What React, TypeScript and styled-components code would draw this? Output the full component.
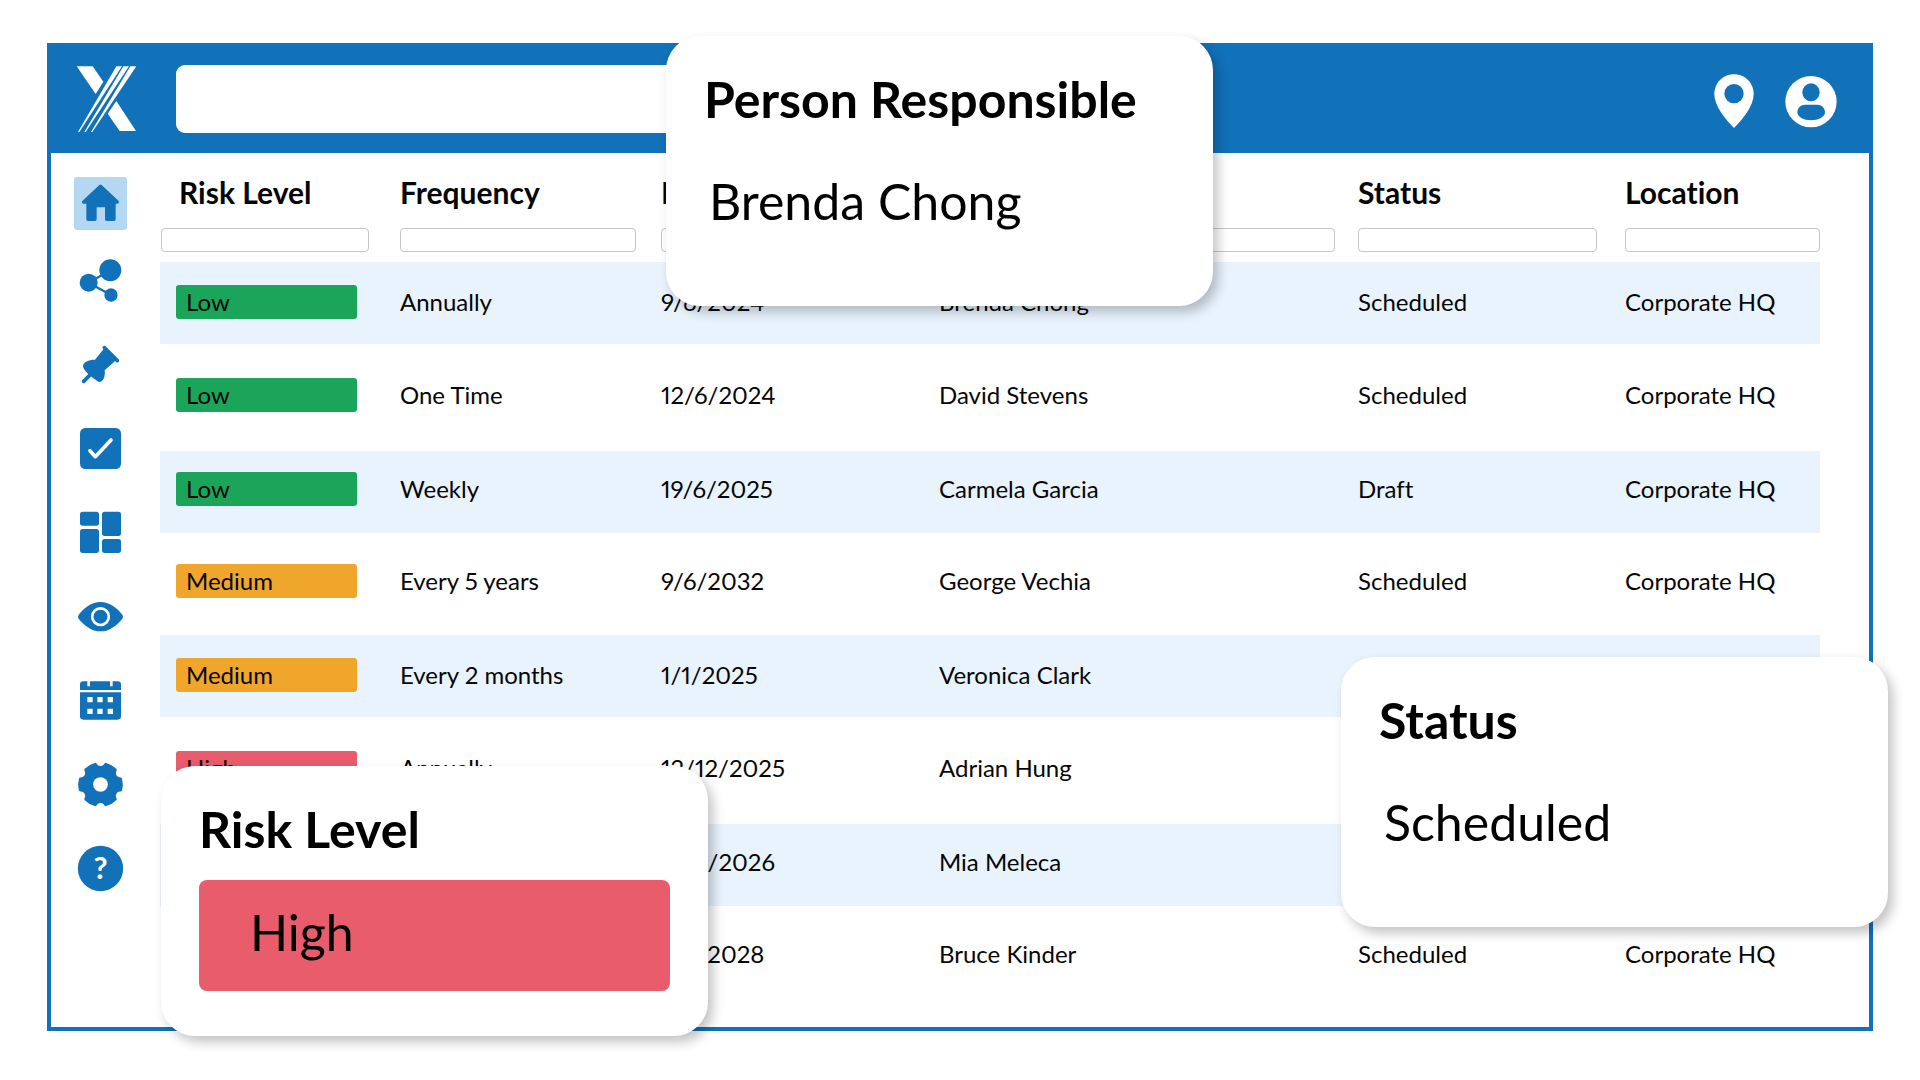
import React from 'react';
import styled, { createGlobalStyle } from 'styled-components';

const BLUE = '#1171b9';

const GlobalStyle = createGlobalStyle`
  * { box-sizing: border-box; }
  body {
    margin: 0;
    background: #ffffff;
    color: #060606;
    font-family: Lato, "Open Sans", sans-serif;
    font-variant-ligatures: none;
    font-variant-numeric: proportional-nums;
  }
`;

const Page = styled.div`
  padding: 43px 47px 49px;
`;

const Frame = styled.div`
  position: relative;
  border: 4px solid ${BLUE};
  background: #ffffff;
`;

const Header = styled.header`
  display: flex;
  align-items: center;
  gap: 30px;
  height: 106px;
  padding: 0 32px 2px 19px;
  background: ${BLUE};
`;

const SearchBox = styled.input`
  flex: 0 1 900px;
  min-width: 0;
  height: 68px;
  padding: 0 20px;
  border: 0;
  border-radius: 9px;
  background: #ffffff;
  font: inherit;
  font-size: 24px;
`;

const HeaderActions = styled.div`
  display: flex;
  align-items: flex-end;
  gap: 31px;
  margin-left: auto;
`;

const IconButton = styled.button`
  display: block;
  padding: 0;
  border: 0;
  background: none;
  cursor: pointer;
  svg { display: block; }
`;

const Body = styled.div`
  display: flex;
`;

const Sidebar = styled.nav`
  display: flex;
  flex-direction: column;
  flex: none;
  width: 99px;
  padding-top: 16px;
`;

const NavItem = styled.button<{ $active?: boolean }>`
  display: flex;
  align-items: center;
  justify-content: center;
  height: ${(p) => (p.$active ? 69 : 84)}px;
  padding: 0;
  border: 0;
  background: none;
  font-family: inherit;
  cursor: pointer;
  svg {
    display: block;
    border-radius: 3px;
    background: ${(p) => (p.$active ? '#b5d8f2' : 'none')};
  }
`;

const Main = styled.main`
  flex: 1;
  min-width: 0;
  padding: 0 49px 19px 10px;
`;

const Table = styled.table`
  width: 100%;
  table-layout: fixed;
  border-collapse: collapse;
`;

const HeadCell = styled.th<{ $first?: boolean }>`
  padding: 21px 0 0 ${(p) => (p.$first ? 19 : 1)}px;
  text-align: left;
  font-size: 30px;
  line-height: 36px;
  font-weight: 700;
  white-space: nowrap;
`;

const FilterCell = styled.td<{ $gap: number }>`
  padding: 18px ${(p) => p.$gap}px 10px 1px;
`;

const FilterInput = styled.input`
  display: block;
  width: 100%;
  height: 24px;
  padding: 0 8px;
  border: 1px solid #c4c6c8;
  border-radius: 4px;
  background: #ffffff;
  font: inherit;
  font-size: 14px;
`;

const Cell = styled.td<{ $first?: boolean }>`
  padding: 0 0 6px ${(p) => (p.$first ? 16 : 1)}px;
  font-size: 24px;
  line-height: 34px;
  vertical-align: middle;
  white-space: nowrap;
`;

const Row = styled.tr`
  height: 82px;
  &:nth-child(odd) { background: #e8f3fd; }
  &:nth-child(4n + 1) > td { padding-bottom: 2px; }
  &:nth-child(4n + 2) { height: 107px; }
  &:nth-child(4n) { height: 102px; }
`;

const riskColors = { Low: '#1aa55b', Medium: '#f0a62a', High: '#e85c6c' };
type Risk = keyof typeof riskColors;

const Badge = styled.div<{ $risk: Risk }>`
  width: 181px;
  height: 34px;
  padding-left: 10px;
  border-radius: 3px;
  background: ${(p) => riskColors[p.$risk]};
`;

const Callout = styled.section<{ $place: 'person' | 'status' | 'risk' }>`
  position: absolute;
  ${(p) =>
    ({
      person: 'left: 615px; top: -11px;',
      status: 'right: -19px; top: 610px;',
      risk: 'left: 110px; bottom: -9px;',
    })[p.$place]}
  width: 547px;
  min-height: 270px;
  padding: 34px 38px 0;
  border-radius: 34px;
  background: #ffffff;
  box-shadow: 5px 6px 12px rgba(0, 0, 0, 0.24);
  line-height: 58px;
  font-size: 50px;
  color: #000000;
`;

const CalloutTitle = styled.h2`
  margin: 0;
  font-size: inherit;
  font-weight: 700;
  white-space: nowrap;
`;

const CalloutValue = styled.p`
  margin: 44px 0 0 5px;
  white-space: nowrap;
`;

const CalloutRisk = styled.p`
  margin: 22px 0 0;
  padding: 23px 51px 30px;
  border-radius: 8px;
  background: ${riskColors.High};
`;

const Logo = () => (
  <svg width="76" height="82" viewBox="0 0 228 246" fill="#ffffff" role="img" aria-label="Logo">
    <path d="M20 25H68L100 71L77 108Z" />
    <path d="M139 129L198 219H149L113 167Z" />
    <path d="M139 25H156L28 222H24Z" />
    <path d="M160 25H177L47 222H43Z" />
    <path d="M181 25H199L67 222H63Z" />
  </svg>
);

const LocationIcon = () => (
  <svg width="40" height="58" viewBox="28 14 120 174">
    <path
      fill="#ffffff"
      d="M88 27C55 27 29 53 29 86C29 122 62 162 88 188C114 162 147 122 147 86C147 53 121 27 88 27Z"
    />
    <circle cx="88" cy="85" r="29" fill={BLUE} />
  </svg>
);

const UserIcon = () => (
  <svg width="52" height="52" viewBox="241 33 156 156">
    <circle cx="319" cy="110" r="77" fill="#ffffff" />
    <g fill={BLUE}>
      <ellipse cx="319" cy="82" rx="26" ry="27" />
      <path d="M301 119H338C351 119 361 129 361 142C361 156 341 166 319 166C297 166 278 156 278 142C278 129 288 119 301 119Z" />
    </g>
  </svg>
);

const NavIcon = ({ top, children }: { top: number; children: React.ReactNode }) => (
  <svg width="53" height="53" viewBox={`102 ${top} 159 159`} fill={BLUE} aria-hidden="true">
    {children}
  </svg>
);

const gearPoint = (angle: number) => {
  const rad = (angle * Math.PI) / 180;
  return `${(181.5 + 62 * Math.cos(rad)).toFixed(1)} ${(853.5 + 62 * Math.sin(rad)).toFixed(1)}`;
};

const gearPath =
  `M${gearPoint(-15)}` +
  [0, 60, 120, 180, 240, 300]
    .map((a) => `A62 62 0 0 1 ${gearPoint(a + 15)}A18 18 0 0 0 ${gearPoint(a + 45)}`)
    .join('') +
  'Z';

const navItems = [
  {
    label: 'Home',
    icon: (
      <NavIcon top={51}>
        <path d="M181.5 79L131 126H232Z" stroke={BLUE} strokeWidth="10" strokeLinejoin="round" />
        <path d="M139 118H227V178Q227 183 222 183H200Q195 183 195 178V142H170V178Q170 183 165 183H144Q139 183 139 178Z" />
      </NavIcon>
    ),
  },
  {
    label: 'Share',
    icon: (
      <NavIcon top={286}>
        <path d="M211 335L146 372L213 409" fill="none" stroke={BLUE} strokeWidth="7" />
        <circle cx="211" cy="335" r="33" />
        <circle cx="146" cy="372" r="27" />
        <circle cx="213" cy="409" r="20" />
      </NavIcon>
    ),
  },
  {
    label: 'Pinned',
    icon: (
      <NavIcon top={537}>
        <path d="M131 667L157 641M193 566L232 605" stroke={BLUE} strokeWidth="11" strokeLinecap="round" />
        <path d="M191 570L165 602C150 601 129 608 129 621C129 636 160 658 175 668C189 673 197 652 194 634L228 604Z" />
      </NavIcon>
    ),
  },
  {
    label: 'Tasks',
    icon: (
      <NavIcon top={789}>
        <rect x="120" y="807" width="123" height="123" rx="16" />
        <path
          d="M150 875L166 893L213 843"
          fill="none"
          stroke="#ffffff"
          strokeWidth="11"
          strokeLinecap="round"
          strokeLinejoin="round"
        />
      </NavIcon>
    ),
  },
  {
    label: 'Dashboard',
    icon: (
      <NavIcon top={20}>
        <rect x="120" y="37" width="57" height="42" rx="8" />
        <rect x="120" y="89" width="57" height="72" rx="8" />
        <rect x="186" y="37" width="57" height="73" rx="8" />
        <rect x="186" y="119" width="57" height="42" rx="8" />
      </NavIcon>
    ),
  },
  {
    label: 'Watch',
    icon: (
      <NavIcon top={271}>
        <path d="M116 345C132 325 155 307 181.5 307C208 307 231 325 247 345Q251 351 247 357C231 377 208 395 181.5 395C155 395 132 377 116 357Q112 351 116 345Z" />
        <circle cx="181.5" cy="351" r="25" fill="none" stroke="#ffffff" strokeWidth="8" />
      </NavIcon>
    ),
  },
  {
    label: 'Calendar',
    icon: (
      <NavIcon top={523}>
        <path d="M130 545H142V560H150V545H210V560H218V545H233Q243 545 243 555V571H120V555Q120 545 130 545Z" />
        <path d="M120 578H243V650Q243 660 233 660H130Q120 660 120 650Z" />
        <g fill="#ffffff">
          {[592, 627].map((y) =>
            [142, 172, 203].map((x) => <rect key={`${x}-${y}`} x={x} y={y} width="16" height="16" rx="1" />),
          )}
        </g>
      </NavIcon>
    ),
  },
  {
    label: 'Settings',
    icon: (
      <NavIcon top={774}>
        <path d={gearPath} stroke={BLUE} strokeWidth="10" strokeLinejoin="round" />
        <circle cx="181.5" cy="853.5" r="22" fill="#ffffff" />
      </NavIcon>
    ),
  },
  {
    label: 'Help',
    icon: (
      <NavIcon top={1026}>
        <circle cx="181.5" cy="1105.5" r="68" />
        <text x="181.5" y="1138" fill="#ffffff" fontSize="92" fontWeight="700" textAnchor="middle">
          ?
        </text>
      </NavIcon>
    ),
  },
];

const columns = [
  { title: 'Risk Level', width: 239, gap: 30 },
  { title: 'Frequency', width: 261, gap: 24 },
  { title: 'Due Date', width: 278, gap: 26 },
  { title: 'Person Responsible', width: 419, gap: 22 },
  { title: 'Status', width: 267, gap: 27 },
  { title: 'Location', width: 196, gap: 0 },
];

const rows: [Risk, string, string, string, string, string][] = [
  ['Low', 'Annually', '9/6/2024', 'Brenda Chong', 'Scheduled', 'Corporate HQ'],
  ['Low', 'One Time', '12/6/2024', 'David Stevens', 'Scheduled', 'Corporate HQ'],
  ['Low', 'Weekly', '19/6/2025', 'Carmela Garcia', 'Draft', 'Corporate HQ'],
  ['Medium', 'Every 5 years', '9/6/2032', 'George Vechia', 'Scheduled', 'Corporate HQ'],
  ['Medium', 'Every 2 months', '1/1/2025', 'Veronica Clark', 'Scheduled', 'Corporate HQ'],
  ['High', 'Annually', '12/12/2025', 'Adrian Hung', 'Scheduled', 'Corporate HQ'],
  ['High', 'Annually', '12/6/2026', 'Mia Meleca', 'Scheduled', 'Corporate HQ'],
  ['High', 'Annually', '9/6/2028', 'Bruce Kinder', 'Scheduled', 'Corporate HQ'],
];

export default function App() {
  return (
    <Page>
      <GlobalStyle />
      <Frame>
        <Header>
          <Logo />
          <SearchBox type="search" aria-label="Search" />
          <HeaderActions>
            <IconButton type="button" aria-label="Locations">
              <LocationIcon />
            </IconButton>
            <IconButton type="button" aria-label="Account">
              <UserIcon />
            </IconButton>
          </HeaderActions>
        </Header>
        <Body>
          <Sidebar aria-label="Main">
            {navItems.map((item, i) => (
              <NavItem key={item.label} type="button" aria-label={item.label} $active={i === 0}>
                {item.icon}
              </NavItem>
            ))}
          </Sidebar>
          <Main>
            <Table>
              <colgroup>
                {columns.map((c) => (
                  <col key={c.title} width={c.width} />
                ))}
              </colgroup>
              <thead>
                <tr>
                  {columns.map((c, i) => (
                    <HeadCell key={c.title} scope="col" $first={i === 0}>
                      {c.title}
                    </HeadCell>
                  ))}
                </tr>
                <tr>
                  {columns.map((c) => (
                    <FilterCell key={c.title} $gap={c.gap}>
                      <FilterInput type="text" aria-label={`Filter by ${c.title}`} />
                    </FilterCell>
                  ))}
                </tr>
              </thead>
              <tbody>
                {rows.map(([risk, ...cells], r) => (
                  <Row key={r}>
                    <Cell $first>
                      <Badge $risk={risk}>{risk}</Badge>
                    </Cell>
                    {cells.map((text, c) => (
                      <Cell key={c}>{text}</Cell>
                    ))}
                  </Row>
                ))}
              </tbody>
            </Table>
          </Main>
        </Body>
        <Callout $place="person">
          <CalloutTitle>Person Responsible</CalloutTitle>
          <CalloutValue>Brenda Chong</CalloutValue>
        </Callout>
        <Callout $place="status">
          <CalloutTitle>Status</CalloutTitle>
          <CalloutValue>Scheduled</CalloutValue>
        </Callout>
        <Callout $place="risk">
          <CalloutTitle>Risk Level</CalloutTitle>
          <CalloutRisk>High</CalloutRisk>
        </Callout>
      </Frame>
    </Page>
  );
}
